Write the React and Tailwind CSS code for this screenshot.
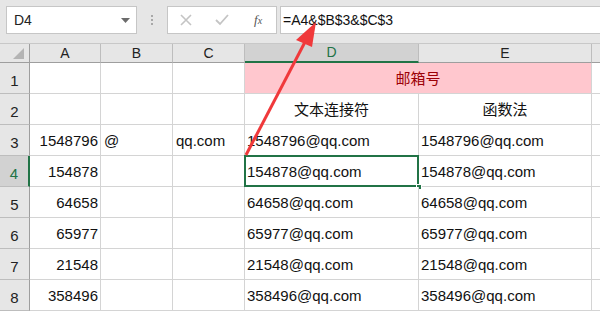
import React from 'react';

const cols = ['A', 'B', 'C', 'D', 'E'];

const rows = [
  { n: 1 },
  { n: 2, d: '文本连接符', e: '函数法' },
  { n: 3, a: '1548796', b: '@', c: 'qq.com', d: '1548796@qq.com', e: '1548796@qq.com' },
  { n: 4, a: '154878', d: '154878@qq.com', e: '154878@qq.com', sel: true },
  { n: 5, a: '64658', d: '64658@qq.com', e: '64658@qq.com' },
  { n: 6, a: '65977', d: '65977@qq.com', e: '65977@qq.com' },
  { n: 7, a: '21548', d: '21548@qq.com', e: '21548@qq.com' },
  { n: 8, a: '358496', d: '358496@qq.com', e: '358496@qq.com' },
];

const cell = 'border-r border-b border-[#d4d4d4] bg-white flex items-end pb-[3px] text-[15px] text-[#111] whitespace-nowrap overflow-visible';

function Toolbar() {
  return (
    <div className="h-[43px] bg-[#e6e6e6] flex items-start pt-[6px] pl-[6px]">
      <div className="w-[131px] h-[28px] bg-white border border-[#c6c6c6] flex items-center justify-between pl-[7px] pr-[6px] text-[14px] text-[#222]">
        <span>D4</span>
        <svg width="9" height="5" viewBox="0 0 9 5"><path d="M0 0h9L4.5 5z" fill="#6b6b6b" /></svg>
      </div>
      <div className="w-[30px] h-[28px] flex flex-col items-center justify-center gap-[2px]">
        <span className="w-[2px] h-[2px] bg-[#a8a8a8]" />
        <span className="w-[2px] h-[2px] bg-[#a8a8a8]" />
        <span className="w-[2px] h-[2px] bg-[#a8a8a8]" />
      </div>
      <div className="w-[110px] h-[28px] bg-white border border-[#c6c6c6] flex items-center">
        <svg className="ml-[12px]" width="12" height="12" viewBox="0 0 12 12"><path d="M1 1l10 10M11 1L1 11" stroke="#c4c4c4" strokeWidth="1.6" /></svg>
        <svg className="ml-[23px]" width="14" height="12" viewBox="0 0 14 12"><path d="M1 6l4 4 8-9" stroke="#c4c4c4" strokeWidth="1.8" fill="none" /></svg>
        <span className="ml-[25px] text-[13px] italic text-[#555]" style={{ fontFamily: '"Liberation Serif", serif' }}>
          f<span className="text-[10px]">x</span>
        </span>
      </div>
      <div className="ml-[3px] flex-1 h-[28px] bg-white border border-r-0 border-[#c6c6c6] flex items-center pl-[2px] text-[14px] text-[#111]">
        =A4&amp;$B$3&amp;$C$3
      </div>
    </div>
  );
}

function Sheet() {
  return (
    <div className="grid grid-cols-[30px_71px_72px_72px_174px_173px_1fr] grid-rows-[19px_repeat(8,31px)] border-t border-[#c8c8c8]">
      <div className="bg-[#e6e6e6] border-r border-b border-[#9e9e9e] relative">
        <svg className="absolute right-[5px] bottom-[3px]" width="11" height="11" viewBox="0 0 11 11"><path d="M11 0v11H0z" fill="#b4b4b4" /></svg>
      </div>
      {cols.map((c) => (
        <div
          key={c}
          className={
            c === 'D'
              ? 'bg-[#d2d2d2] border-r border-[#bdbdbd] border-b-2 border-b-[#217346] flex items-center justify-center text-[14px] text-[#217346]'
              : 'bg-[#e6e6e6] border-r border-[#bdbdbd] border-b border-b-[#9e9e9e] flex items-center justify-center text-[14px] text-[#222]'
          }
        >
          {c}
        </div>
      ))}
      <div className="bg-[#e6e6e6] border-b border-[#9e9e9e]" />
      {rows.map((r) => (
        <React.Fragment key={r.n}>
          <div
            className={
              r.sel
                ? 'bg-[#d2d2d2] border-r-2 border-r-[#217346] border-b border-b-[#bdbdbd] flex items-end justify-center pb-[1px] text-[15px] text-[#217346]'
                : 'bg-[#e6e6e6] border-r border-r-[#9e9e9e] border-b border-b-[#bdbdbd] flex items-end justify-center pb-[1px] text-[15px] text-[#222]'
            }
          >
            {r.n}
          </div>
          <div className={cell + ' justify-end pr-[2px]'}>{r.a}</div>
          <div className={cell + ' pl-[3px]'}>{r.b}</div>
          <div className={cell + ' pl-[3px]'}>{r.c}</div>
          {r.n === 1 ? (
            <div className="col-span-2 bg-[#ffc7ce] border-r border-b border-[#d4d4d4] flex items-end justify-center pb-[3px] text-[15px] text-[#9c0006]">
              邮箱号
            </div>
          ) : (
            <>
              <div className={cell + (r.n === 2 ? ' justify-center' : ' pl-[2px]') + ' relative'}>
                {r.d}
                {r.sel && (
                  <>
                    <div className="absolute -left-px -top-px right-[-1px] bottom-[-1px] border-2 border-[#217346]" />
                    <div className="absolute right-[-4px] bottom-[-4px] w-[6px] h-[6px] bg-[#217346] border border-white" />
                  </>
                )}
              </div>
              <div className={cell + (r.n === 2 ? ' justify-center' : ' pl-[2px]')}>{r.e}</div>
            </>
          )}
          <div className="bg-white border-b border-[#d4d4d4]" />
        </React.Fragment>
      ))}
    </div>
  );
}

export default function App() {
  return (
    <div
      className="w-[600px] h-[314px] overflow-hidden relative bg-white"
      style={{ fontFamily: '"Liberation Sans", "Noto Sans CJK SC", sans-serif' }}
    >
      <Toolbar />
      <Sheet />
      {/* red arrow pointing at the formula */}
      <svg className="absolute left-0 top-0 pointer-events-none" width="600" height="314">
        <line x1="246" y1="155" x2="305" y2="42" stroke="#f0393b" strokeWidth="3" />
        <path d="M316 22 L296 40 L312 47 Z" fill="#f0393b" />
      </svg>
    </div>
  );
}
